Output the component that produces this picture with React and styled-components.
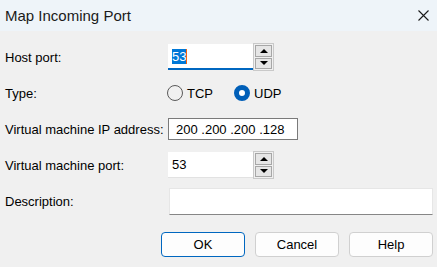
import styled, { createGlobalStyle } from "styled-components"

const GlobalStyle = createGlobalStyle`
    html, body {
        margin: 0;
        padding: 0;
        background: #f0f0f0;
    }
    body {
        font-family: "Liberation Sans", Arial, sans-serif;
        color: #000;
    }
`

const Window = styled.div`
    width: 437px;
    height: 267px;
    background: #f0f0f0;
    display: flex;
    flex-direction: column;
    overflow: hidden;
`

const TitleBar = styled.div`
    height: 31px;
    background: #eef4f9;
    display: flex;
    align-items: center;
    justify-content: space-between;
    padding: 0 8px 0 5px;
`

const Title = styled.span`
    font-size: 15px;
    color: #1a1a1a;
`

const Body = styled.div`
    padding: 8px 0 0 5px;
    display: flex;
    flex-direction: column;
`

const Row = styled.div`
    height: 36px;
    display: grid;
    grid-template-columns: 163px 1fr;
    align-items: center;
`

const Label = styled.span`
    font-size: 13px;
`

const SpinField = styled.div`
    display: flex;
    align-items: center;
`

const NumberBox = styled.div`
    width: 85px;
    height: 26px;
    box-sizing: border-box;
    background: #fff;
    border-bottom: ${p => p.$focused ? "2px solid #0067c0" : "1px solid #e2e2e2"};
    display: flex;
    align-items: center;
    padding-left: 4px;
    font-size: 13px;
`

const Selected = styled.span`
    background: #0078d7;
    color: #fff;
    border-right: 1px solid #f7630c;
`

const Spinner = styled.div`
    width: 21px;
    height: 28px;
    box-sizing: border-box;
    border: 1px solid #c9c9c9;
    padding: 1px;
    display: flex;
    flex-direction: column;
    gap: 1px;
`

const SpinButton = styled.div`
    flex: 1;
    border: 1px solid #a7a7a7;
    background: #e6e6e6;
    display: flex;
    align-items: center;
    justify-content: center;
`

const Arrow = styled.div`
    width: 0;
    height: 0;
    border-left: 4px solid transparent;
    border-right: 4px solid transparent;
    ${p => p.$up ? "border-bottom: 4px solid #000;" : "border-top: 4px solid #000;"}
`

const RadioGroup = styled.div`
    display: flex;
    align-items: center;
    margin-left: -1px;
`

const RadioOption = styled.label`
    display: inline-flex;
    align-items: center;
    gap: 4px;
    min-width: 67px;
    font-size: 13px;
`

const RadioDot = styled.span`
    width: 16px;
    height: 16px;
    box-sizing: border-box;
    border-radius: 50%;
    border: ${p => p.$checked ? "5px solid #005fb8" : "1px solid #5a5a5a"};
    background: ${p => p.$checked ? "#fff" : "transparent"};
`

const IpBox = styled.div`
    width: 130px;
    height: 22px;
    box-sizing: border-box;
    border: 1px solid #7a7a7a;
    background: #fff;
    display: flex;
    align-items: center;
    padding-left: 7px;
    font-size: 13px;
    white-space: pre;
`

const TextBox = styled.div`
    width: 264px;
    height: 27px;
    box-sizing: border-box;
    background: #fff;
    border: 1px solid #e6e6e6;
    border-bottom: 1px solid #868686;
    margin-left: 1px;
`

const ButtonRow = styled.div`
    display: flex;
    justify-content: flex-end;
    gap: 10px;
    margin-top: 13px;
    padding-right: 4px;
`

const Button = styled.button`
    width: 84px;
    height: 25px;
    box-sizing: border-box;
    border-radius: 4px;
    background: #fdfdfd;
    border: 1px solid ${p => p.$primary ? "#0067c0" : "#d0d0d0"};
    font-family: inherit;
    font-size: 13px;
    color: #000;
    padding: 0;
`

const Spin = () => (
    <Spinner>
        <SpinButton><Arrow $up /></SpinButton>
        <SpinButton><Arrow /></SpinButton>
    </Spinner>
)

const App = () => {
    return (
        <Window>
            <GlobalStyle />
            <TitleBar>
                <Title>Map Incoming Port</Title>
                <svg width="11" height="11" viewBox="0 0 11 11">
                    <path d="M0.5 0.5 L10.5 10.5 M10.5 0.5 L0.5 10.5" stroke="#1a1a1a" strokeWidth="1.1" fill="none" />
                </svg>
            </TitleBar>
            <Body>
                <Row>
                    <Label>Host port:</Label>
                    <SpinField>
                        <NumberBox $focused><Selected>53</Selected></NumberBox>
                        <Spin />
                    </SpinField>
                </Row>
                <Row>
                    <Label>Type:</Label>
                    <RadioGroup>
                        <RadioOption><RadioDot />TCP</RadioOption>
                        <RadioOption><RadioDot $checked />UDP</RadioOption>
                    </RadioGroup>
                </Row>
                <Row>
                    <Label>Virtual machine IP address:</Label>
                    <IpBox>200 .200 .200 .128</IpBox>
                </Row>
                <Row>
                    <Label>Virtual machine port:</Label>
                    <SpinField>
                        <NumberBox>53</NumberBox>
                        <Spin />
                    </SpinField>
                </Row>
                <Row>
                    <Label>Description:</Label>
                    <TextBox />
                </Row>
            </Body>
            <ButtonRow>
                <Button $primary>OK</Button>
                <Button>Cancel</Button>
                <Button>Help</Button>
            </ButtonRow>
        </Window>
    )
}

export default App
